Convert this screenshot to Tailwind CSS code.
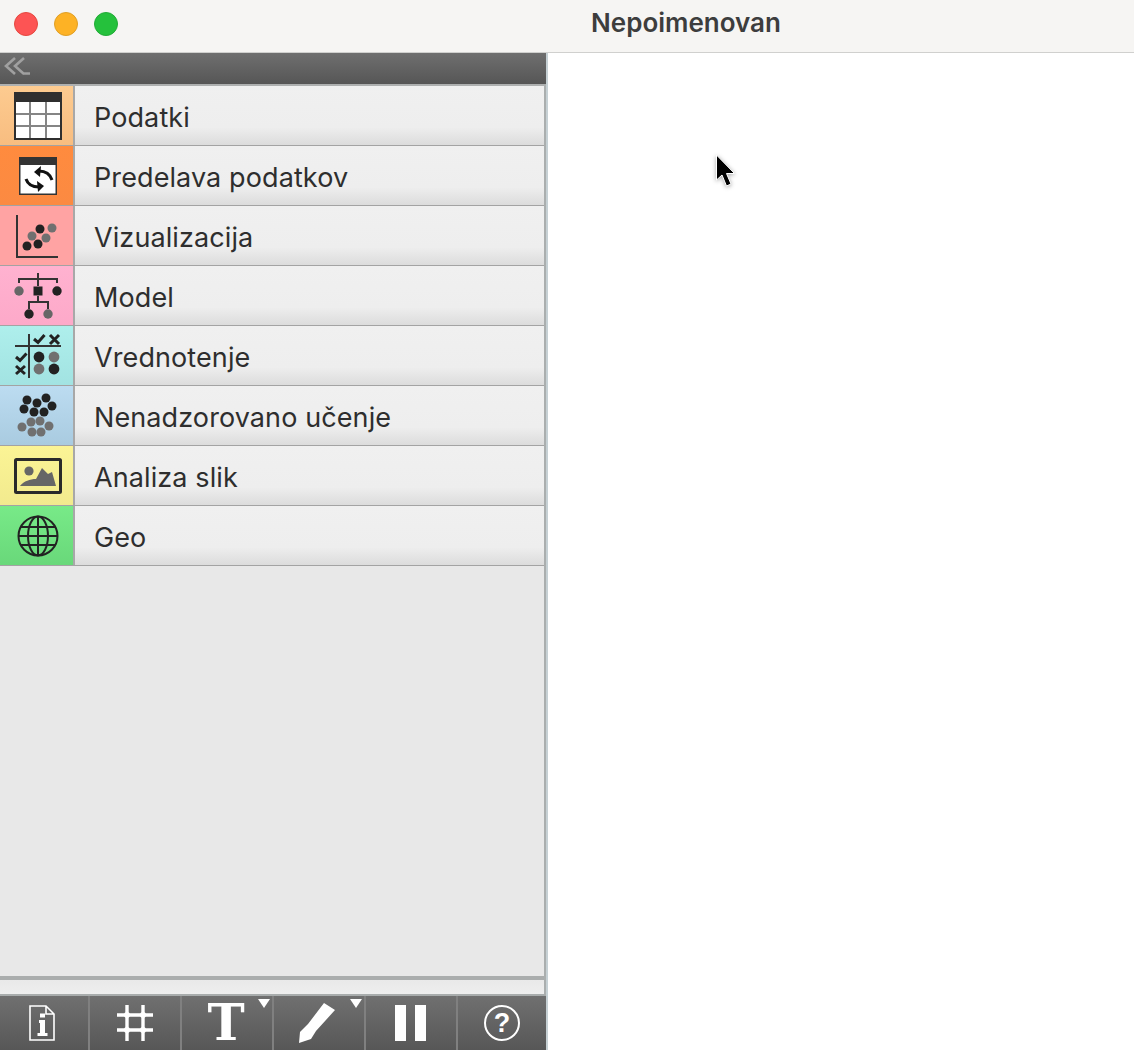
<!DOCTYPE html>
<html lang="en">
<head>
    <meta charset="UTF-8">
    <title>Nepoimenovan</title>
    <script src="https://cdn.jsdelivr.net/npm/@tailwindcss/browser@4"></script>
</head>
<body class="bg-white font-['Inter',sans-serif] overflow-hidden">
<div class="w-[1134px] h-[1050px] flex flex-col relative">
    <!-- title bar -->
    <header class="h-[53px] shrink-0 bg-[#f6f5f3] border-b border-[#d0d0ce] relative flex items-center justify-center pb-[8px]">
        <div class="absolute left-[14px] top-[12px] flex gap-[16px]">
            <span class="w-6 h-6 rounded-full bg-[#fd5454] border border-[#e5483f]"></span>
            <span class="w-6 h-6 rounded-full bg-[#fdb225] border border-[#e09f25]"></span>
            <span class="w-6 h-6 rounded-full bg-[#25c13c] border border-[#22ab37]"></span>
        </div>
        <h1 class="ml-[238px] text-[26px] font-semibold text-[#3d3d3d]">Nepoimenovan</h1>
    </header>

    <div class="flex flex-1 min-h-0">
        <!-- sidebar -->
        <aside class="w-[548px] shrink-0 flex flex-col bg-[#e8e8e8] border-r-2 border-[#c6d0d4]">
            <div class="h-[31px] shrink-0 bg-gradient-to-b from-[#6f6f6f] to-[#565656] flex items-center pl-[4px] pb-[6px]">
                <svg width="28" height="18" viewBox="0 0 28 18" fill="none" stroke="#a0a0a0" stroke-width="2.6"><path d="M11 1 2 9l9 8M20 1l-9 8 9 8M19 16.500h7"/></svg>
            </div>
            <div class="flex-1 flex flex-col min-h-0 border-r-2 border-[#aaaeae]">
            <nav class="border-t-2 border-[#aeb0b0]">
                <div class="h-[60px] flex border-b border-[#a3a3a3]">
                    <div class="w-[73px] shrink-0 bg-gradient-to-b from-[#fdcb90] to-[#f8bd80] flex items-center justify-center pl-[3px]">
                        <svg width="48" height="48" viewBox="0 0 48 48"><rect width="48" height="48" fill="#2f2f2f"/><path d="M2 10h44v36H2z" fill="#fff"/><path d="M16 10v36M32 10v36M2 22h44M2 34h44" stroke="#858585" stroke-width="2"/></svg>
                    </div>
                    <div class="flex-1 border-l-2 border-[#a8a8a8] bg-gradient-to-b from-[#f0f0f0] via-[#eeeeee] via-70% to-[#dcdcdc] flex items-center pl-[19px] pt-[6px] text-[27px] tracking-[0.1px] text-[#2e2e2e]">Podatki</div>
                </div>
                <div class="h-[60px] flex border-b border-[#a3a3a3]">
                    <div class="w-[73px] shrink-0 bg-gradient-to-b from-[#ff8b3e] to-[#fb8a42] flex items-center justify-center pl-[3px]">
                        <svg width="38" height="38" viewBox="0 0 38 38"><rect width="38" height="38" fill="#333"/><rect x="1.500" y="8" width="35" height="28.500" fill="#fff"/><path d="M33 23C31 17 26 14 20 14" fill="none" stroke="#111" stroke-width="3"/><path d="M15 15l7-6-1 11z" fill="#111"/><path d="M7 22c2 6 7 8 13 8" fill="none" stroke="#111" stroke-width="3"/><path d="M25 29l-7-5 1 11z" fill="#111"/></svg>
                    </div>
                    <div class="flex-1 border-l-2 border-[#a8a8a8] bg-gradient-to-b from-[#f0f0f0] via-[#eeeeee] via-70% to-[#dcdcdc] flex items-center pl-[19px] pt-[6px] text-[27px] tracking-[0.1px] text-[#2e2e2e]">Predelava podatkov</div>
                </div>
                <div class="h-[60px] flex border-b border-[#a3a3a3]">
                    <div class="w-[73px] shrink-0 bg-[#ffa3a3] flex items-center justify-center pl-[3px]">
                        <svg width="44" height="44" viewBox="0 0 44 44" fill="#222"><path d="M1 1v42h41" fill="none" stroke="#333" stroke-width="2"/><circle cx="11" cy="32" r="4.500"/><circle cx="22" cy="30" r="4.500"/><circle cx="24" cy="15" r="4.500"/><circle cx="16" cy="22" r="4.500" fill="#707070"/><circle cx="30" cy="24" r="4.500" fill="#707070"/><circle cx="36" cy="14" r="4.500" fill="#707070"/></svg>
                    </div>
                    <div class="flex-1 border-l-2 border-[#a8a8a8] bg-gradient-to-b from-[#f0f0f0] via-[#eeeeee] via-70% to-[#dcdcdc] flex items-center pl-[19px] pt-[6px] text-[27px] tracking-[0.1px] text-[#2e2e2e]">Vizualizacija</div>
                </div>
                <div class="h-[60px] flex border-b border-[#a3a3a3]">
                    <div class="w-[73px] shrink-0 bg-gradient-to-b from-[#ffb2d0] to-[#fda9c9] flex items-center justify-center pl-[3px]">
                        <svg width="48" height="48" viewBox="0 0 48 48"><path d="M24 1v13M5 11V7h38v4M24 24v6M15 37v-7h19v7" fill="none" stroke="#333" stroke-width="2"/><circle cx="5" cy="19" r="4.700" fill="#666"/><rect x="19.500" y="14.500" width="9" height="9" fill="#222"/><circle cx="43" cy="19" r="4.700" fill="#222"/><circle cx="15" cy="42" r="4.700" fill="#222"/><circle cx="34" cy="42" r="4.700" fill="#666"/></svg>
                    </div>
                    <div class="flex-1 border-l-2 border-[#a8a8a8] bg-gradient-to-b from-[#f0f0f0] via-[#eeeeee] via-70% to-[#dcdcdc] flex items-center pl-[19px] pt-[6px] text-[27px] tracking-[0.1px] text-[#2e2e2e]">Model</div>
                </div>
                <div class="h-[60px] flex border-b border-[#a3a3a3]">
                    <div class="w-[73px] shrink-0 bg-gradient-to-b from-[#aeefec] to-[#a2e3e2] flex items-center justify-center pl-[3px]">
                        <svg width="48" height="48" viewBox="0 0 48 48"><path d="M15 2v44M1 14h46" fill="none" stroke="#333" stroke-width="2"/><path d="M20 7l4 3.500 6.500-7.500M2 25l4 3.500 6.500-7" fill="none" stroke="#222" stroke-width="3"/><path d="M36 3l9 9M45 3l-9 9M2 34l9 8M11 34l-9 8" fill="none" stroke="#222" stroke-width="3"/><circle cx="25" cy="25" r="5.400" fill="#222"/><circle cx="40" cy="25" r="5.400" fill="#707070"/><circle cx="25" cy="37" r="5.400" fill="#707070"/><circle cx="40" cy="37" r="5.400" fill="#222"/></svg>
                    </div>
                    <div class="flex-1 border-l-2 border-[#a8a8a8] bg-gradient-to-b from-[#f0f0f0] via-[#eeeeee] via-70% to-[#dcdcdc] flex items-center pl-[19px] pt-[6px] text-[27px] tracking-[0.1px] text-[#2e2e2e]">Vrednotenje</div>
                </div>
                <div class="h-[60px] flex border-b border-[#a3a3a3]">
                    <div class="w-[73px] shrink-0 bg-gradient-to-b from-[#bcdcf1] to-[#a9cbe0] flex items-center justify-center pl-[3px]">
                        <svg width="48" height="48" viewBox="0 0 48 48" fill="#222"><circle cx="13" cy="8" r="4.500"/><circle cx="23" cy="11" r="4.500"/><circle cx="32" cy="6" r="4.500"/><circle cx="10" cy="17" r="4.500"/><circle cx="20" cy="20" r="4.500"/><circle cx="30" cy="20" r="4.500"/><circle cx="38" cy="14" r="4.500"/><g fill="#707070"><circle cx="17" cy="30" r="4.500"/><circle cx="26" cy="29" r="4.500"/><circle cx="8" cy="35" r="4.500"/><circle cx="35" cy="34" r="4.500"/><circle cx="18" cy="40" r="4.500"/><circle cx="27" cy="40" r="4.500"/></g></svg>
                    </div>
                    <div class="flex-1 border-l-2 border-[#a8a8a8] bg-gradient-to-b from-[#f0f0f0] via-[#eeeeee] via-70% to-[#dcdcdc] flex items-center pl-[19px] pt-[6px] text-[27px] tracking-[0.1px] text-[#2e2e2e]">Nenadzorovano učenje</div>
                </div>
                <div class="h-[60px] flex border-b border-[#a3a3a3]">
                    <div class="w-[73px] shrink-0 bg-gradient-to-b from-[#fbf495] to-[#f2ea8e] flex items-center justify-center pl-[3px]">
                        <svg width="48" height="36" viewBox="0 0 48 36"><rect x="1.500" y="1.500" width="45" height="33" rx="1" fill="none" stroke="#2a2a2a" stroke-width="3"/><circle cx="15" cy="13" r="4.600" fill="#666"/><path d="M6 28c4-5 10-7 16-7l6-11 6 6 4-2 4 14z" fill="#666"/></svg>
                    </div>
                    <div class="flex-1 border-l-2 border-[#a8a8a8] bg-gradient-to-b from-[#f0f0f0] via-[#eeeeee] via-70% to-[#dcdcdc] flex items-center pl-[19px] pt-[6px] text-[27px] tracking-[0.1px] text-[#2e2e2e]">Analiza slik</div>
                </div>
                <div class="h-[60px] flex border-b border-[#a3a3a3]">
                    <div class="w-[73px] shrink-0 bg-gradient-to-b from-[#78ea88] to-[#69d87a] flex items-center justify-center pl-[3px]">
                        <svg width="42" height="42" viewBox="0 0 42 42" fill="none" stroke="#222" stroke-width="2"><circle cx="21" cy="21" r="19.500"/><ellipse cx="21" cy="21" rx="10" ry="19.500"/><path d="M21 1v40M1.500 21h39M3.700 12h34.600M3.700 30h34.600"/></svg>
                    </div>
                    <div class="flex-1 border-l-2 border-[#a8a8a8] bg-gradient-to-b from-[#f0f0f0] via-[#eeeeee] via-70% to-[#dcdcdc] flex items-center pl-[19px] pt-[6px] text-[27px] tracking-[0.1px] text-[#2e2e2e]">Geo</div>
                </div>
            </nav>
            <div class="flex-1"></div>
            <div class="h-[4px] shrink-0 bg-[#aaadad]"></div>
            <div class="h-[14px] shrink-0 bg-gradient-to-b from-[#e9e9e9] to-[#eeeeee]"></div>
            </div>
            <!-- bottom toolbar -->
            <div class="h-[56px] shrink-0 border-t-2 border-[#a8acac] bg-gradient-to-b from-[#707070] to-[#575757] flex">
                <div class="w-[90px] border-r-2 border-[#808080] flex items-center justify-center pr-[5px]">
                    <svg width="26" height="36" viewBox="0 0 26 36" fill="none" stroke="#fff" stroke-width="1.600"><path d="M1 1h16l8 8v26H1zM17 1v8h8"/><path d="M10 15h6v13h2.500v3H8.500v-3H11v-10h-1zM11 8.500h5v4h-5z" fill="#fff" stroke="none"/></svg>
                </div>
                <div class="w-[92px] border-r-2 border-[#808080] flex items-center justify-center">
                    <svg width="36" height="36" viewBox="0 0 36 36" stroke="#fff" stroke-width="3.400" fill="#fff"><path d="M10 0v36M26 0v36M0 10h36M0 25h36"/><circle cx="10" cy="10" r="3" stroke="none"/><circle cx="26" cy="10" r="3" stroke="none"/><circle cx="10" cy="25" r="3" stroke="none"/><circle cx="26" cy="25" r="3" stroke="none"/></svg>
                </div>
                <div class="w-[92px] border-r-2 border-[#808080] relative flex items-center justify-center pr-[2px]">
                    <span class="text-[50px] leading-none font-bold text-white font-['DejaVu_Serif',serif]">T</span>
                    <span class="absolute right-[2px] top-[3px] w-0 h-0 border-x-[6px] border-x-transparent border-t-[9px] border-t-white"></span>
                </div>
                <div class="w-[92px] border-r-2 border-[#808080] relative flex items-center justify-center pr-[4px]">
                    <svg width="40" height="44" viewBox="0 0 40 44" fill="#fff"><polygon points="27,2 38,9 19,30 14,38 2,42 3,31 11,23"/></svg>
                    <span class="absolute right-[2px] top-[3px] w-0 h-0 border-x-[6px] border-x-transparent border-t-[9px] border-t-white"></span>
                </div>
                <div class="w-[92px] border-r-2 border-[#808080] flex items-center justify-center gap-[9px] pr-[2px]">
                    <span class="w-[11px] h-[36px] bg-white"></span>
                    <span class="w-[11px] h-[36px] bg-white"></span>
                </div>
                <div class="flex-1 flex items-center justify-center">
                    <span class="w-[36px] h-[36px] rounded-full border-[2.500px] border-white flex items-center justify-center text-[27px] font-bold text-white font-['Liberation_Sans',sans-serif]">?</span>
                </div>
            </div>
        </aside>
        <main class="flex-1 bg-white relative">
            <!-- mouse cursor -->
            <svg class="absolute left-[167px] top-[101px] drop-shadow-[0_1px_2px_rgba(0,0,0,0.35)]" width="24" height="36" viewBox="0 0 24 36"><path d="M1.500 1v25l5.500-5 4.500 11 4.500-2-4.500-10.500h8z" fill="#000" stroke="#fff" stroke-width="1"/></svg>
        </main>
    </div>
</div>
</body>
</html>
